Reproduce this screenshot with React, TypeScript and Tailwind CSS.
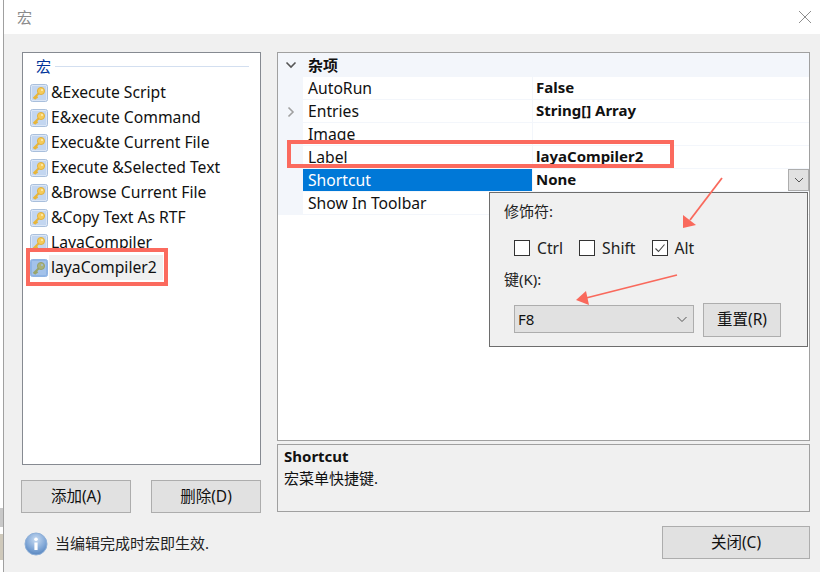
const macros = [
  "&Execute Script",
  "E&xecute Command",
  "Execu&te Current File",
  "Execute &Selected Text",
  "&Browse Current File",
  "&Copy Text As RTF",
  "LayaCompiler",
];

const props = [
  { name: "AutoRun", value: "False" },
  { name: "Entries", value: "String[] Array", expandable: true },
  { name: "Image", value: "" },
  { name: "Label", value: "layaCompiler2" },
  { name: "Shortcut", value: "None", selected: true },
  { name: "Show In Toolbar", value: "" },
];

function KeyIcon({ dim }: { dim?: boolean }) {
  return (
    <svg width="18" height="18" viewBox="0 0 18 18" className="shrink-0">
      <rect x="0.5" y="0.5" width="17" height="17" rx="2" fill={dim ? "#8fb4e4" : "#dbe6f6"} stroke={dim ? "#8fb4e4" : "#a9bfdc"} />
      <rect x="2" y="2" width="14" height="14" fill={dim ? "#a3c2ea" : "#c3d6f0"} />
      <path d="M3.5 14.5 L9 9 M4.5 15 L6.5 13 M6 14 L7.5 12.5" stroke={dim ? "#9aa56a" : "#e8b53a"} strokeWidth="2" fill="none" />
      <circle cx="11" cy="7" r="3.6" fill={dim ? "#a9b27a" : "#f5cb5c"} stroke={dim ? "#8f9a62" : "#e0aa2c"} strokeWidth="0.8" />
      <circle cx="12" cy="6" r="0.9" fill={dim ? "#a3c2ea" : "#fff3c4"} />
    </svg>
  );
}

function InfoIcon() {
  return (
    <svg width="24" height="24" viewBox="0 0 24 24" className="shrink-0">
      <defs>
        <radialGradient id="info" cx="50%" cy="30%" r="75%">
          <stop offset="0%" stopColor="#c9dcf2" />
          <stop offset="60%" stopColor="#7fa6d6" />
          <stop offset="100%" stopColor="#4f7fba" />
        </radialGradient>
      </defs>
      <circle cx="12" cy="12" r="11" fill="url(#info)" stroke="#8fb0d8" />
      <circle cx="12" cy="7.2" r="1.8" fill="#fff" />
      <path d="M10.4 10.5h3.2v7.5h-3.2z" fill="#fff" />
    </svg>
  );
}

function Button({ children, className }: { children: React.ReactNode; className: string }) {
  return (
    <div className={`flex items-center justify-center bg-[#e1e1e1] border-[1px] border-[#adadad] text-[15.5px] text-[#111] ${className}`}>
      {children}
    </div>
  );
}

function Checkbox({ label, checked }: { label: string; checked?: boolean }) {
  return (
    <div className="flex items-center gap-[7px]">
      <div className="size-4 bg-white border border-[#333] flex items-center justify-center">
        {checked && (
          <svg width="12" height="12" viewBox="0 0 12 12">
            <path d="M1.5 6.5 L4.5 9.5 L10.5 2.5" stroke="#444" strokeWidth="1.1" fill="none" />
          </svg>
        )}
      </div>
      <span className="text-[15.7px] text-[#222]">{label}</span>
    </div>
  );
}

function Arrows() {
  return (
    <svg className="absolute left-0 top-0 pointer-events-none" width="820" height="572">
      <path d="M722 178 L690 220" stroke="#f9695c" strokeWidth="1.8" fill="none" />
      <path d="M683 228 L683 215 L696 225 Z" fill="#f9695c" />
      <path d="M677 275 L586 298" stroke="#f9695c" strokeWidth="1.8" fill="none" />
      <path d="M576 300 L586 291 L589 305 Z" fill="#f9695c" />
    </svg>
  );
}

export default function App() {
  return (
    <div
      className="relative w-[820px] h-[572px] overflow-hidden bg-white flex flex-col"
      style={{ fontFamily: '"Noto Sans", "Noto Sans CJK SC", sans-serif' }}
    >
      {/* desktop showing behind the window edge */}
      <div className="absolute left-0 top-[508px] w-[3px] h-[19px] bg-[#c8c8c8]" />
      <div className="absolute left-0 top-[534px] w-[3px] h-[26px] bg-[#cfc9bb]" />

      {/* title bar */}
      <div className="h-[34px] shrink-0 flex items-center justify-between pl-[13px] pr-[7px] border-l border-[#a0a0a0] ml-[3px]">
        <span className="text-[15px] text-[#8a8a8a]">宏</span>
        <svg width="14" height="14" viewBox="0 0 14 14" className="mr-[1px]">
          <path d="M1 1 L13 13 M13 1 L1 13" stroke="#8e8e8e" strokeWidth="1" />
        </svg>
      </div>

      <div className="flex-1 ml-[3px] border-l border-[#a0a0a0] bg-[#f0f0f0] flex flex-col">
        <div className="flex pt-[18px] pl-[17px] pr-[10px] gap-[14px]">
          {/* left column */}
          <div className="w-[242px] flex flex-col">
            <div className="ml-[1px] w-[239px] h-[413px] bg-white border border-[#868a91] pl-[7px] pr-[11px]">
              <div className="flex items-center h-[27px] pl-[6px] gap-1">
                <span className="text-[15px] leading-none text-[#003399]">宏</span>
                <div className="flex-1 h-px bg-[#d3dff0]" />
              </div>
              {macros.map((m) => (
                <div key={m} className="h-[25px] flex items-center gap-[3px]">
                  <KeyIcon />
                  <span className="text-[15.7px] text-[#111] whitespace-nowrap">{m}</span>
                </div>
              ))}
              <div className="h-[25px] flex items-center gap-[1px]">
                <KeyIcon dim />
                <span className="text-[15.7px] text-[#111] bg-[#f0f0f0] pl-[2px] pr-[6px] h-[25px] leading-[25px] whitespace-nowrap">
                  layaCompiler2
                </span>
              </div>
            </div>
            <div className="flex justify-between mt-[15px] w-[240px]">
              <Button className="w-[110px] h-[33px]">添加(A)</Button>
              <Button className="w-[110px] h-[33px]">删除(D)</Button>
            </div>
          </div>

          {/* right column */}
          <div className="flex-1 flex flex-col gap-[3px]">
            <div className="h-[389px] bg-white border border-[#a0a0a0]">
              <div className="h-[24px] bg-[#f3f6fb] flex items-center">
                <div className="w-[25px] flex justify-center">
                  <svg width="12" height="8" viewBox="0 0 12 8">
                    <path d="M1.5 1.5 L6 6 L10.5 1.5" stroke="#555" strokeWidth="1.6" fill="none" />
                  </svg>
                </div>
                <span className="text-[15px] font-bold text-[#111] pl-[5px]">杂项</span>
              </div>
              {props.map((p) => (
                <div key={p.name} className="h-[23px] flex">
                  <div className="w-[25px] bg-[#f3f6fb] flex items-center justify-center">
                    {p.expandable && (
                      <svg width="8" height="12" viewBox="0 0 8 12">
                        <path d="M1.5 1.5 L6 6 L1.5 10.5" stroke="#a0a0a0" strokeWidth="1.6" fill="none" />
                      </svg>
                    )}
                  </div>
                  <div
                    className={`w-[229px] pl-[5px] text-[15.7px] leading-[22px] border-b border-[#f3f6fb] ${
                      p.selected ? "bg-[#0078d7] text-white" : "text-[#111]"
                    }`}
                  >
                    {p.name}
                  </div>
                  <div className="flex-1 flex justify-between border-l border-b border-[#f3f6fb] text-[15px] leading-[21px] font-bold text-[#111] pl-[3px]">
                    <span>{p.value}</span>
                    {p.selected && (
                      <div className="w-[21px] h-[22px] bg-[#e1e1e1] border border-[#adadad] flex items-center justify-center">
                        <svg width="10" height="6" viewBox="0 0 10 6">
                          <path d="M1 1 L5 5 L9 1" stroke="#555" strokeWidth="1" fill="none" />
                        </svg>
                      </div>
                    )}
                  </div>
                </div>
              ))}
            </div>
            <div className="h-[68px] border border-[#a0a0a0] px-[6px] text-[#111]">
              <div className="text-[15px] font-bold leading-[22px]">Shortcut</div>
              <div className="text-[15px] leading-[23px]">宏菜单快捷键.</div>
            </div>
          </div>
        </div>

        {/* bottom bar */}
        <div className="flex items-center justify-between pl-[20px] pr-[10px] mt-[13px]">
          <div className="flex items-center gap-[7px] pt-[2px]">
            <InfoIcon />
            <span className="text-[15px] text-[#222]">当编辑完成时宏即生效.</span>
          </div>
          <Button className="w-[148px] h-[33px]">关闭(C)</Button>
        </div>
      </div>

      {/* shortcut editor dropdown */}
      <div className="absolute left-[489px] top-[192px] w-[319px] h-[155px] bg-[#f0f0f0] border border-[#6d6d6d] pl-[14px] pt-[8px]">
        <div className="text-[15px] leading-5 text-[#222]">修饰符:</div>
        <div className="flex gap-[16px] pl-[10px] mt-[17px] leading-5">
          <Checkbox label="Ctrl" />
          <Checkbox label="Shift" />
          <Checkbox label="Alt" checked />
        </div>
        <div className="text-[15px] leading-5 text-[#222] mt-[11px]">键(K):</div>
        <div className="flex gap-[9px] pl-[10px] mt-[16px]">
          <div className="w-[180px] h-[28px] bg-[#e1e1e1] border border-[#adadad] flex items-center justify-between px-[3px] text-[15px] text-[#111]">
            F8
            <svg width="12" height="7" viewBox="0 0 12 7" className="mr-[2px]">
              <path d="M1.5 1 L6 5.5 L10.5 1" stroke="#555" strokeWidth="1" fill="none" />
            </svg>
          </div>
          <Button className="w-[78px] h-[34px] -mt-[2px]">重置(R)</Button>
        </div>
      </div>

      {/* annotations */}
      <div className="absolute left-[26px] top-[248px] w-[142px] h-[38px] border-[4px] border-[#fb6a5e]" />
      <div className="absolute left-[287px] top-[140px] w-[387px] h-[28px] border-[4px] border-[#fb6a5e]" />
      <Arrows />
    </div>
  );
}
